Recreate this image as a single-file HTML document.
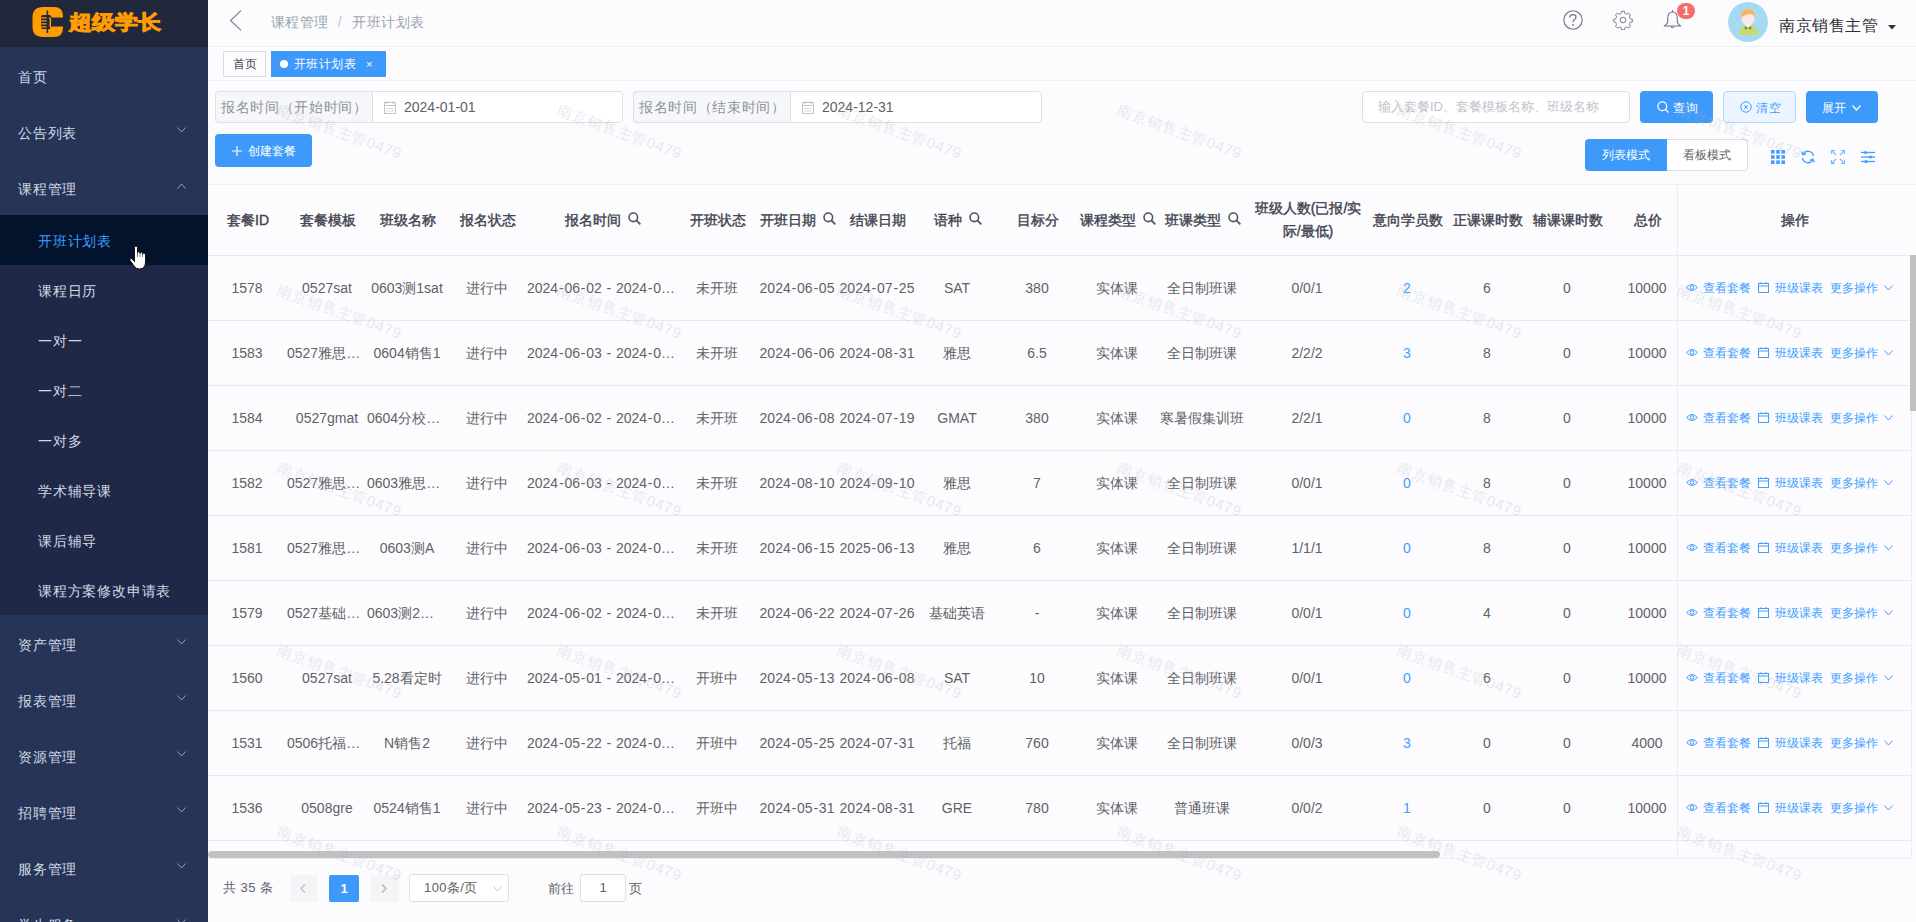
<!DOCTYPE html><html><head><meta charset="utf-8"><title>开班计划表</title><style>
*{box-sizing:border-box;margin:0;padding:0}
html,body{width:1916px;height:922px;overflow:hidden}
body{position:relative;background:#fcfcfe;font-family:"Liberation Sans",sans-serif;color:#606266;font-size:14px}
.a{position:absolute}
.nw{white-space:nowrap}
#side{position:absolute;left:0;top:0;width:208px;height:922px;background:#263557;overflow:hidden;z-index:5}
#logo{position:absolute;left:0;top:0;width:208px;height:47px;background:#21283c}
.mi{position:absolute;left:0;width:208px;height:56px;line-height:60px;color:#d3d9e3;font-size:14px;padding-left:18px;letter-spacing:0.8px}
.mi .chev{position:absolute;left:177px;top:24px;width:9px;height:6px}
#sub{position:absolute;left:0;top:215px;width:208px;height:400px;background:#202848}
.si{position:absolute;left:0;width:208px;height:50px;line-height:53px;color:#d3d9e3;font-size:14px;padding-left:38px;letter-spacing:0.8px}
.si.act{background:#03132b;color:#409eff}
.hline{position:absolute;left:208px;width:1708px;height:1px;background:#eef0f4}
.crumb{color:#9aa4b4;font-size:14px;letter-spacing:0.45px}
.tag{position:absolute;top:51px;height:26px;line-height:25px;font-size:12px;border:1px solid #d8dce5;color:#3a3f4a;background:#fdfdff;padding:0 8px}
.tag.on{background:#3d99fa;border-color:#3d99fa;color:#fff}
.grp{position:absolute;top:91px;height:32px}
.pre{position:absolute;top:0;height:32px;background:#f5f7fa;border:1px solid #dcdfe6;border-right:0;border-radius:4px 0 0 4px;color:#909399;font-size:14px;line-height:31px;padding-left:5px;letter-spacing:0.65px}
.inp{position:absolute;top:0;height:32px;background:#fff;border:1px solid #dcdfe6;border-radius:0 4px 4px 0;color:#606266;font-size:14px;line-height:30px}
.btn{position:absolute;height:32px;border-radius:4px;font-size:12px;line-height:32px;text-align:center;color:#fff;background:#3d99fa}
th,td{padding:0}
.th{position:absolute;top:185px;height:70px;padding-left:2px;display:flex;align-items:center;justify-content:center;color:#3f4450;-webkit-text-stroke:0.4px #3f4450;font-size:14px;text-align:center;line-height:23px}
.td{position:absolute;height:65px;line-height:67px;text-align:center;white-space:nowrap;overflow:hidden;text-overflow:ellipsis;color:#606266;font-size:14px}
.rl{position:absolute;left:207px;width:1704px;height:1px;background:#e6e9f0}
.blue{color:#409eff}
.hy{margin:0 0.8px}
.ops{position:absolute;left:1677px;width:233px;height:65px;line-height:67px;font-size:12px;color:#409eff;white-space:nowrap}
.wm{position:absolute;color:rgba(175,180,198,0.3);font-size:15px;letter-spacing:0.8px;transform:rotate(20deg);transform-origin:0 0;white-space:nowrap}
</style></head><body>
<div id="side">
<div id="logo">
<svg class="a" style="left:32px;top:7px" width="32" height="30" viewBox="0 0 32 30"><path d="M11 0 H22 Q31 0 31 9 V10.5 H20 L18 8 H11 Q9 8 9 10 V20 Q9 22 11 22 H18 L20 19.5 H31 V20.5 Q31 30 22 30 H11 Q0.5 30 0.5 19.5 V10.5 Q0.5 0 11 0 Z" fill="#ff9c00"/><rect x="14.6" y="3.5" width="1.6" height="22.5" fill="#21283c"/><path d="M9 10.8 H14.6 M9 13.8 H14.6 M9 16.8 H14.6 M9 19.8 H14.6" stroke="#ff9c00" stroke-width="1.2"/><path d="M17.2 10.5 Q19.2 12 18.4 15 Q17.6 18 18.8 21" fill="none" stroke="#ff9c00" stroke-width="1.5"/></svg>
<div class="a nw" style="left:69px;top:9px;font-size:20px;line-height:26px;font-weight:bold;color:#ff9c00;-webkit-text-stroke:0.9px #ff9c00;transform:scaleX(1.15);transform-origin:0 0">超级学长</div>
</div>
<div class="mi" style="top:47px">首页</div>
<div class="mi" style="top:103px">公告列表<svg class="chev" viewBox="0 0 9 6"><path d="M0.5 0.5 L4.5 5 L8.5 0.5" fill="none" stroke="#9aa3b0" stroke-width="1"/></svg></div>
<div class="mi" style="top:159px">课程管理<svg class="chev" viewBox="0 0 9 6"><path d="M0.5 5.5 L4.5 1 L8.5 5.5" fill="none" stroke="#9aa3b0" stroke-width="1"/></svg></div>
<div id="sub">
<div class="si act" style="top:0px">开班计划表</div>
<div class="si" style="top:50px">课程日历</div>
<div class="si" style="top:100px">一对一</div>
<div class="si" style="top:150px">一对二</div>
<div class="si" style="top:200px">一对多</div>
<div class="si" style="top:250px">学术辅导课</div>
<div class="si" style="top:300px">课后辅导</div>
<div class="si" style="top:350px">课程方案修改申请表</div>
</div>
<div class="mi" style="top:615px">资产管理<svg class="chev" viewBox="0 0 9 6"><path d="M0.5 0.5 L4.5 5 L8.5 0.5" fill="none" stroke="#9aa3b0" stroke-width="1"/></svg></div>
<div class="mi" style="top:671px">报表管理<svg class="chev" viewBox="0 0 9 6"><path d="M0.5 0.5 L4.5 5 L8.5 0.5" fill="none" stroke="#9aa3b0" stroke-width="1"/></svg></div>
<div class="mi" style="top:727px">资源管理<svg class="chev" viewBox="0 0 9 6"><path d="M0.5 0.5 L4.5 5 L8.5 0.5" fill="none" stroke="#9aa3b0" stroke-width="1"/></svg></div>
<div class="mi" style="top:783px">招聘管理<svg class="chev" viewBox="0 0 9 6"><path d="M0.5 0.5 L4.5 5 L8.5 0.5" fill="none" stroke="#9aa3b0" stroke-width="1"/></svg></div>
<div class="mi" style="top:839px">服务管理<svg class="chev" viewBox="0 0 9 6"><path d="M0.5 0.5 L4.5 5 L8.5 0.5" fill="none" stroke="#9aa3b0" stroke-width="1"/></svg></div>
<div class="mi" style="top:895px">学生服务<svg class="chev" viewBox="0 0 9 6"><path d="M0.5 0.5 L4.5 5 L8.5 0.5" fill="none" stroke="#9aa3b0" stroke-width="1"/></svg></div>
<svg class="a" style="left:129px;top:245px" width="20" height="26" viewBox="0 0 20 26"><path d="M5.5 2.5 Q5.5 1 7 1 Q8.5 1 8.5 2.5 V8 Q8.5 6.5 9.8 6.5 Q11 6.5 11 8 V8.5 Q11 7 12.3 7 Q13.5 7 13.5 8.5 V9.5 Q13.5 8 14.8 8 Q16.5 8 16.5 9.8 V17 Q16.5 24 10.5 24 Q7 24 5 21 L1.2 15.6 Q0.5 14.3 1.6 13.8 Q2.6 13.4 3.6 14.4 L5.5 16.5 Z" fill="#fff" stroke="#111" stroke-width="1"/><path d="M8.5 8 V12 M11 8.5 V12 M13.5 9.5 V12" stroke="#333" stroke-width="0.6"/></svg>
</div>
<svg class="a" style="left:229px;top:10px" width="13" height="21" viewBox="0 0 13 21"><path d="M12 0.7 L1.5 10.5 L12 20.3" fill="none" stroke="#7d8089" stroke-width="1.15"/></svg>
<div class="a nw crumb" style="left:271px;top:13px;line-height:18px">课程管理<span style="margin:0 10px 0 9px;color:#c0c4cc">/</span>开班计划表</div>
<svg class="a" style="left:1563px;top:10px" width="20" height="20" viewBox="0 0 20 20"><circle cx="10" cy="10" r="9.2" fill="none" stroke="#6f747c" stroke-width="1.1"/><path d="M6.8 7.4 Q6.8 4.6 10 4.6 Q13 4.6 13 7.2 Q13 8.8 11.2 9.8 Q10 10.5 10 12.2" fill="none" stroke="#6f747c" stroke-width="1.2"/><circle cx="10" cy="14.8" r="0.9" fill="#6f747c"/></svg>
<svg class="a" style="left:1613px;top:10px" width="20" height="20" viewBox="0 0 24 24"><path d="M12 1.5 l1.6 0 0.6 2.6 a8 8 0 0 1 2.3 1 l2.3-1.4 2.2 2.2-1.4 2.3 a8 8 0 0 1 1 2.3 l2.6 0.6 0 3.2-2.6 0.6 a8 8 0 0 1-1 2.3 l1.4 2.3-2.2 2.2-2.3-1.4 a8 8 0 0 1-2.3 1 l-0.6 2.6-3.2 0-0.6-2.6 a8 8 0 0 1-2.3-1 l-2.3 1.4-2.2-2.2 1.4-2.3 a8 8 0 0 1-1-2.3 l-2.6-0.6 0-3.2 2.6-0.6 a8 8 0 0 1 1-2.3 l-1.4-2.3 2.2-2.2 2.3 1.4 a8 8 0 0 1 2.3-1 l0.6-2.6 z" fill="none" stroke="#6f747c" stroke-width="1.1" stroke-linejoin="round"/><circle cx="12" cy="12" r="3.4" fill="none" stroke="#6f747c" stroke-width="1.1"/></svg>
<svg class="a" style="left:1663px;top:9px" width="19" height="21" viewBox="0 0 19 21"><path d="M9.5 3 Q14.3 3 14.3 9.5 V12.5 Q14.3 14.8 17.8 17 H1.2 Q4.7 14.8 4.7 12.5 V9.5 Q4.7 3 9.5 3 Z" fill="none" stroke="#6f747c" stroke-width="1.1" stroke-linejoin="round"/><path d="M9.5 1 V3" stroke="#6f747c" stroke-width="1.1"/><path d="M7.8 17.5 Q9.5 20 11.2 17.5" fill="none" stroke="#6f747c" stroke-width="1.1"/></svg>
<div class="a" style="left:1677px;top:3px;width:18px;height:16px;border-radius:8px;background:#f56c6c;color:#fff;font-size:12px;line-height:16px;text-align:center;font-weight:bold">1</div>
<svg class="a" style="left:1728px;top:2px" width="40" height="40" viewBox="0 0 40 40"><circle cx="20" cy="20" r="20" fill="#a6daf2"/><path d="M10.5 33 H30.5 L27.5 24.5 H13.5 Z" fill="#cbd96c"/><path d="M16 22 H24 L20 25.5 Z" fill="#ffffff"/><path d="M16.8 24 L20 26 L16.8 28 Z M23.2 24 L20 26 L23.2 28 Z" fill="#5e9c34"/><ellipse cx="20" cy="16.5" rx="6.6" ry="6.8" fill="#fde6ea"/><path d="M13.2 15.5 Q12.6 7 20 7 Q27.4 7 26.8 15.5 Q25 11.5 21 12 Q17 12.5 13.2 15.5 Z" fill="#f8b45a"/></svg>
<div class="a nw" style="left:1779px;top:16px;font-size:16px;line-height:20px;color:#303133;letter-spacing:0.5px">南京销售主管</div>
<svg class="a" style="left:1888px;top:25px" width="8" height="5" viewBox="0 0 8 5"><path d="M0 0 H8 L4 4.5 Z" fill="#303133"/></svg>
<div class="hline" style="top:46px"></div>
<div class="hline" style="top:80px"></div>
<div class="hline" style="top:184px"></div>
<div class="tag" style="left:223px;width:43px;text-align:center;padding:0">首页</div>
<div class="tag on" style="left:271px;width:115px;padding:0"><span class="a" style="left:8px;top:8px;width:8px;height:8px;border-radius:4px;background:#fff"></span><span class="a nw" style="left:22px;top:0;letter-spacing:0.45px">开班计划表</span><span class="a" style="left:94px;top:0;font-size:11px">×</span></div>
<div class="pre nw" style="left:215px;top:91px;width:157px">报名时间（开始时间）</div>
<div class="inp nw" style="left:372px;top:91px;width:251px"><svg class="a" style="left:11px;top:9px" width="12" height="13" viewBox="0 0 12 13"><rect x="0.5" y="1.5" width="11" height="11" fill="none" stroke="#c0c4cc" stroke-width="1"/><line x1="0.5" y1="4.5" x2="11.5" y2="4.5" stroke="#c0c4cc"/><line x1="3" y1="0" x2="3" y2="3" stroke="#c0c4cc"/><line x1="9" y1="0" x2="9" y2="3" stroke="#c0c4cc"/><line x1="2.5" y1="7.5" x2="9.5" y2="7.5" stroke="#c0c4cc" stroke-dasharray="1.5 1"/><line x1="2.5" y1="10" x2="9.5" y2="10" stroke="#c0c4cc" stroke-dasharray="1.5 1"/></svg><span class="a" style="left:31px;top:0">2024-01-01</span></div>
<div class="pre nw" style="left:633px;top:91px;width:157px">报名时间（结束时间）</div>
<div class="inp nw" style="left:790px;top:91px;width:252px"><svg class="a" style="left:11px;top:9px" width="12" height="13" viewBox="0 0 12 13"><rect x="0.5" y="1.5" width="11" height="11" fill="none" stroke="#c0c4cc" stroke-width="1"/><line x1="0.5" y1="4.5" x2="11.5" y2="4.5" stroke="#c0c4cc"/><line x1="3" y1="0" x2="3" y2="3" stroke="#c0c4cc"/><line x1="9" y1="0" x2="9" y2="3" stroke="#c0c4cc"/><line x1="2.5" y1="7.5" x2="9.5" y2="7.5" stroke="#c0c4cc" stroke-dasharray="1.5 1"/><line x1="2.5" y1="10" x2="9.5" y2="10" stroke="#c0c4cc" stroke-dasharray="1.5 1"/></svg><span class="a" style="left:31px;top:0">2024-12-31</span></div>
<div class="inp nw" style="left:1362px;top:91px;width:268px;border-radius:4px;color:#c0c4cc;font-size:13px;padding-left:15px">输入套餐ID、套餐模板名称、班级名称</div>
<div class="btn nw" style="left:1640px;top:91px;width:73px"><svg class="a" style="left:17px;top:10px" width="12" height="12" viewBox="0 0 12 12"><circle cx="5.3" cy="5.3" r="4.4" fill="none" stroke="#fff" stroke-width="1.3"/><line x1="8.5" y1="8.5" x2="11.5" y2="11.5" stroke="#fff" stroke-width="1.3"/></svg><span class="a" style="left:33px;top:1px;letter-spacing:0.6px">查询</span></div>
<div class="btn nw" style="left:1723px;top:91px;width:73px;background:#ecf5ff;border:1px solid #b3d8ff;color:#409eff;line-height:30px"><svg class="a" style="left:16px;top:9px" width="12" height="12" viewBox="0 0 12 12"><circle cx="6" cy="6" r="5.2" fill="none" stroke="#409eff" stroke-width="1"/><path d="M4.2 4.2 L7.8 7.8 M7.8 4.2 L4.2 7.8" stroke="#409eff" stroke-width="1"/></svg><span class="a" style="left:32px;top:1px;letter-spacing:0.6px">清空</span></div>
<div class="btn nw" style="left:1806px;top:91px;width:72px"><span class="a" style="left:16px;top:1px;letter-spacing:0.4px">展开</span><svg class="a" style="left:46px;top:14px" width="9" height="6" viewBox="0 0 9 6"><path d="M0.5 0.5 L4.5 5 L8.5 0.5" fill="none" stroke="#fff" stroke-width="1.2"/></svg></div>
<div class="btn nw" style="left:215px;top:134px;width:97px;height:33px;line-height:35px"><svg class="a" style="left:17px;top:12px" width="10" height="10" viewBox="0 0 10 10"><path d="M5 0 V10 M0 5 H10" stroke="#fff" stroke-width="1.2"/></svg><span class="a" style="left:33px;top:0">创建套餐</span></div>
<div class="btn nw" style="left:1585px;top:139px;width:82px;border-radius:4px 0 0 4px">列表模式</div>
<div class="btn nw" style="left:1667px;top:139px;width:81px;border-radius:0 4px 4px 0;background:#fff;border:1px solid #dcdfe6;border-left:0;color:#606266;line-height:30px">看板模式</div>
<svg class="a" style="left:1771px;top:150px" width="14" height="14" viewBox="0 0 14 14" fill="#409eff"><rect x="0" y="0" width="3.6" height="3.6"/><rect x="0" y="5.2" width="3.6" height="3.6"/><rect x="0" y="10.4" width="3.6" height="3.6"/><rect x="5.2" y="0" width="3.6" height="3.6"/><rect x="5.2" y="5.2" width="3.6" height="3.6"/><rect x="5.2" y="10.4" width="3.6" height="3.6"/><rect x="10.4" y="0" width="3.6" height="3.6"/><rect x="10.4" y="5.2" width="3.6" height="3.6"/><rect x="10.4" y="10.4" width="3.6" height="3.6"/></svg>
<svg class="a" style="left:1801px;top:150px" width="14" height="14" viewBox="0 0 14 14"><path d="M12.5 6 A5.6 5.6 0 0 0 2.2 4" fill="none" stroke="#409eff" stroke-width="1.4"/><path d="M1.5 8 A5.6 5.6 0 0 0 11.8 10" fill="none" stroke="#409eff" stroke-width="1.4"/><path d="M0.8 1.5 L2 4.8 L5 3.6" fill="none" stroke="#409eff" stroke-width="1.3"/><path d="M13.2 12.5 L12 9.2 L9 10.4" fill="none" stroke="#409eff" stroke-width="1.3"/></svg>
<svg class="a" style="left:1831px;top:150px" width="14" height="14" viewBox="0 0 14 14" fill="none" stroke="#79b8ff" stroke-width="1.1"><path d="M0.5 4 V0.5 H4 M10 0.5 H13.5 V4 M13.5 10 V13.5 H10 M4 13.5 H0.5 V10"/><path d="M1 1 L5 5 M13 1 L9 5 M13 13 L9 9 M1 13 L5 9"/></svg>
<svg class="a" style="left:1861px;top:150px" width="14" height="14" viewBox="0 0 14 14"><g stroke="#409eff" stroke-width="1.3"><line x1="0" y1="2.5" x2="14" y2="2.5"/><line x1="0" y1="7" x2="14" y2="7"/><line x1="0" y1="11.5" x2="14" y2="11.5"/></g><g fill="#409eff"><circle cx="4.5" cy="2.5" r="1.6"/><circle cx="9.5" cy="7" r="1.6"/><circle cx="5" cy="11.5" r="1.6"/></g></svg>
<div class="th" style="left:207px;width:80px"><span>套餐ID</span></div>
<div class="th" style="left:287px;width:80px"><span>套餐模板</span></div>
<div class="th" style="left:367px;width:80px"><span>班级名称</span></div>
<div class="th" style="left:447px;width:80px"><span>报名状态</span></div>
<div class="th" style="left:527px;width:150px"><span>报名时间<svg style="margin-left:7px;vertical-align:middle;position:relative;top:-2px" width="13" height="13" viewBox="0 0 13 13"><circle cx="5.3" cy="5.3" r="4.3" fill="none" stroke="#515560" stroke-width="1.6"/><line x1="8.4" y1="8.4" x2="12.3" y2="12.3" stroke="#515560" stroke-width="1.8"/></svg></span></div>
<div class="th" style="left:677px;width:80px"><span>开班状态</span></div>
<div class="th" style="left:757px;width:80px"><span>开班日期<svg style="margin-left:7px;vertical-align:middle;position:relative;top:-2px" width="13" height="13" viewBox="0 0 13 13"><circle cx="5.3" cy="5.3" r="4.3" fill="none" stroke="#515560" stroke-width="1.6"/><line x1="8.4" y1="8.4" x2="12.3" y2="12.3" stroke="#515560" stroke-width="1.8"/></svg></span></div>
<div class="th" style="left:837px;width:80px"><span>结课日期</span></div>
<div class="th" style="left:917px;width:80px"><span>语种<svg style="margin-left:7px;vertical-align:middle;position:relative;top:-2px" width="13" height="13" viewBox="0 0 13 13"><circle cx="5.3" cy="5.3" r="4.3" fill="none" stroke="#515560" stroke-width="1.6"/><line x1="8.4" y1="8.4" x2="12.3" y2="12.3" stroke="#515560" stroke-width="1.8"/></svg></span></div>
<div class="th" style="left:997px;width:80px"><span>目标分</span></div>
<div class="th" style="left:1077px;width:80px"><span>课程类型<svg style="margin-left:7px;vertical-align:middle;position:relative;top:-2px" width="13" height="13" viewBox="0 0 13 13"><circle cx="5.3" cy="5.3" r="4.3" fill="none" stroke="#515560" stroke-width="1.6"/><line x1="8.4" y1="8.4" x2="12.3" y2="12.3" stroke="#515560" stroke-width="1.8"/></svg></span></div>
<div class="th" style="left:1157px;width:90px"><span>班课类型<svg style="margin-left:7px;vertical-align:middle;position:relative;top:-2px" width="13" height="13" viewBox="0 0 13 13"><circle cx="5.3" cy="5.3" r="4.3" fill="none" stroke="#515560" stroke-width="1.6"/><line x1="8.4" y1="8.4" x2="12.3" y2="12.3" stroke="#515560" stroke-width="1.8"/></svg></span></div>
<div class="th" style="left:1247px;width:120px"><span>班级人数(已报/实际/最低)</span></div>
<div class="th" style="left:1367px;width:80px"><span>意向学员数</span></div>
<div class="th" style="left:1447px;width:80px"><span>正课课时数</span></div>
<div class="th" style="left:1527px;width:80px"><span>辅课课时数</span></div>
<div class="th" style="left:1607px;width:80px"><span>总价</span></div>
<div class="th" style="left:1677px;width:233px">操作</div>
<div class="rl" style="top:255px"></div>
<div class="td" style="left:207px;top:255px;width:80px">1578</div>
<div class="td" style="left:287px;top:255px;width:80px">0527sat</div>
<div class="td" style="left:367px;top:255px;width:80px">0603测1sat</div>
<div class="td" style="left:447px;top:255px;width:80px">进行中</div>
<div class="td" style="left:527px;top:255px;width:150px">2024<span class="hy">-</span>06<span class="hy">-</span>02 <span class="hy">-</span> 2024<span class="hy">-</span>07<span class="hy">-</span>01</div>
<div class="td" style="left:677px;top:255px;width:80px">未开班</div>
<div class="td" style="left:757px;top:255px;width:80px">2024<span class="hy">-</span>06<span class="hy">-</span>05</div>
<div class="td" style="left:837px;top:255px;width:80px">2024<span class="hy">-</span>07<span class="hy">-</span>25</div>
<div class="td" style="left:917px;top:255px;width:80px">SAT</div>
<div class="td" style="left:997px;top:255px;width:80px">380</div>
<div class="td" style="left:1077px;top:255px;width:80px">实体课</div>
<div class="td" style="left:1157px;top:255px;width:90px">全日制班课</div>
<div class="td" style="left:1247px;top:255px;width:120px">0/0/1</div>
<div class="td blue" style="left:1367px;top:255px;width:80px">2</div>
<div class="td" style="left:1447px;top:255px;width:80px">6</div>
<div class="td" style="left:1527px;top:255px;width:80px">0</div>
<div class="td" style="left:1607px;top:255px;width:80px">10000</div>
<div class="ops" style="top:255px"><span class="a" style="left:9px;top:0"><svg style="vertical-align:middle;position:relative;top:-1px;margin-right:5px" width="12" height="9" viewBox="0 0 12 9"><path d="M0.6 4.5 Q6 -1.5 11.4 4.5 Q6 10.5 0.6 4.5 Z" fill="none" stroke="#409eff" stroke-width="1"/><circle cx="6" cy="4.5" r="1.8" fill="none" stroke="#409eff" stroke-width="1"/></svg>查看套餐<svg style="vertical-align:middle;position:relative;top:-1px;margin-left:7px;margin-right:6px" width="11" height="11" viewBox="0 0 11 11"><rect x="0.5" y="1.5" width="10" height="9" fill="none" stroke="#409eff" stroke-width="1"/><line x1="0.5" y1="4" x2="10.5" y2="4" stroke="#409eff"/><line x1="3" y1="0" x2="3" y2="2" stroke="#409eff"/><line x1="8" y1="0" x2="8" y2="2" stroke="#409eff"/></svg>班级课表<span style="margin-left:7px">更多操作</span><svg style="vertical-align:middle;position:relative;top:-1px;margin-left:6px" width="9" height="6" viewBox="0 0 9 6"><path d="M0.5 0.5 L4.5 5 L8.5 0.5" fill="none" stroke="#409eff" stroke-width="1"/></svg></span></div>
<div class="rl" style="top:320px"></div>
<div class="td" style="left:207px;top:320px;width:80px">1583</div>
<div class="td" style="left:287px;top:320px;width:80px">0527雅思考试</div>
<div class="td" style="left:367px;top:320px;width:80px">0604销售1</div>
<div class="td" style="left:447px;top:320px;width:80px">进行中</div>
<div class="td" style="left:527px;top:320px;width:150px">2024<span class="hy">-</span>06<span class="hy">-</span>03 <span class="hy">-</span> 2024<span class="hy">-</span>07<span class="hy">-</span>01</div>
<div class="td" style="left:677px;top:320px;width:80px">未开班</div>
<div class="td" style="left:757px;top:320px;width:80px">2024<span class="hy">-</span>06<span class="hy">-</span>06</div>
<div class="td" style="left:837px;top:320px;width:80px">2024<span class="hy">-</span>08<span class="hy">-</span>31</div>
<div class="td" style="left:917px;top:320px;width:80px">雅思</div>
<div class="td" style="left:997px;top:320px;width:80px">6.5</div>
<div class="td" style="left:1077px;top:320px;width:80px">实体课</div>
<div class="td" style="left:1157px;top:320px;width:90px">全日制班课</div>
<div class="td" style="left:1247px;top:320px;width:120px">2/2/2</div>
<div class="td blue" style="left:1367px;top:320px;width:80px">3</div>
<div class="td" style="left:1447px;top:320px;width:80px">8</div>
<div class="td" style="left:1527px;top:320px;width:80px">0</div>
<div class="td" style="left:1607px;top:320px;width:80px">10000</div>
<div class="ops" style="top:320px"><span class="a" style="left:9px;top:0"><svg style="vertical-align:middle;position:relative;top:-1px;margin-right:5px" width="12" height="9" viewBox="0 0 12 9"><path d="M0.6 4.5 Q6 -1.5 11.4 4.5 Q6 10.5 0.6 4.5 Z" fill="none" stroke="#409eff" stroke-width="1"/><circle cx="6" cy="4.5" r="1.8" fill="none" stroke="#409eff" stroke-width="1"/></svg>查看套餐<svg style="vertical-align:middle;position:relative;top:-1px;margin-left:7px;margin-right:6px" width="11" height="11" viewBox="0 0 11 11"><rect x="0.5" y="1.5" width="10" height="9" fill="none" stroke="#409eff" stroke-width="1"/><line x1="0.5" y1="4" x2="10.5" y2="4" stroke="#409eff"/><line x1="3" y1="0" x2="3" y2="2" stroke="#409eff"/><line x1="8" y1="0" x2="8" y2="2" stroke="#409eff"/></svg>班级课表<span style="margin-left:7px">更多操作</span><svg style="vertical-align:middle;position:relative;top:-1px;margin-left:6px" width="9" height="6" viewBox="0 0 9 6"><path d="M0.5 0.5 L4.5 5 L8.5 0.5" fill="none" stroke="#409eff" stroke-width="1"/></svg></span></div>
<div class="rl" style="top:385px"></div>
<div class="td" style="left:207px;top:385px;width:80px">1584</div>
<div class="td" style="left:287px;top:385px;width:80px">0527gmat</div>
<div class="td" style="left:367px;top:385px;width:80px">0604分校测试</div>
<div class="td" style="left:447px;top:385px;width:80px">进行中</div>
<div class="td" style="left:527px;top:385px;width:150px">2024<span class="hy">-</span>06<span class="hy">-</span>02 <span class="hy">-</span> 2024<span class="hy">-</span>07<span class="hy">-</span>01</div>
<div class="td" style="left:677px;top:385px;width:80px">未开班</div>
<div class="td" style="left:757px;top:385px;width:80px">2024<span class="hy">-</span>06<span class="hy">-</span>08</div>
<div class="td" style="left:837px;top:385px;width:80px">2024<span class="hy">-</span>07<span class="hy">-</span>19</div>
<div class="td" style="left:917px;top:385px;width:80px">GMAT</div>
<div class="td" style="left:997px;top:385px;width:80px">380</div>
<div class="td" style="left:1077px;top:385px;width:80px">实体课</div>
<div class="td" style="left:1157px;top:385px;width:90px">寒暑假集训班</div>
<div class="td" style="left:1247px;top:385px;width:120px">2/2/1</div>
<div class="td blue" style="left:1367px;top:385px;width:80px">0</div>
<div class="td" style="left:1447px;top:385px;width:80px">8</div>
<div class="td" style="left:1527px;top:385px;width:80px">0</div>
<div class="td" style="left:1607px;top:385px;width:80px">10000</div>
<div class="ops" style="top:385px"><span class="a" style="left:9px;top:0"><svg style="vertical-align:middle;position:relative;top:-1px;margin-right:5px" width="12" height="9" viewBox="0 0 12 9"><path d="M0.6 4.5 Q6 -1.5 11.4 4.5 Q6 10.5 0.6 4.5 Z" fill="none" stroke="#409eff" stroke-width="1"/><circle cx="6" cy="4.5" r="1.8" fill="none" stroke="#409eff" stroke-width="1"/></svg>查看套餐<svg style="vertical-align:middle;position:relative;top:-1px;margin-left:7px;margin-right:6px" width="11" height="11" viewBox="0 0 11 11"><rect x="0.5" y="1.5" width="10" height="9" fill="none" stroke="#409eff" stroke-width="1"/><line x1="0.5" y1="4" x2="10.5" y2="4" stroke="#409eff"/><line x1="3" y1="0" x2="3" y2="2" stroke="#409eff"/><line x1="8" y1="0" x2="8" y2="2" stroke="#409eff"/></svg>班级课表<span style="margin-left:7px">更多操作</span><svg style="vertical-align:middle;position:relative;top:-1px;margin-left:6px" width="9" height="6" viewBox="0 0 9 6"><path d="M0.5 0.5 L4.5 5 L8.5 0.5" fill="none" stroke="#409eff" stroke-width="1"/></svg></span></div>
<div class="rl" style="top:450px"></div>
<div class="td" style="left:207px;top:450px;width:80px">1582</div>
<div class="td" style="left:287px;top:450px;width:80px">0527雅思考试</div>
<div class="td" style="left:367px;top:450px;width:80px">0603雅思测试</div>
<div class="td" style="left:447px;top:450px;width:80px">进行中</div>
<div class="td" style="left:527px;top:450px;width:150px">2024<span class="hy">-</span>06<span class="hy">-</span>03 <span class="hy">-</span> 2024<span class="hy">-</span>07<span class="hy">-</span>01</div>
<div class="td" style="left:677px;top:450px;width:80px">未开班</div>
<div class="td" style="left:757px;top:450px;width:80px">2024<span class="hy">-</span>08<span class="hy">-</span>10</div>
<div class="td" style="left:837px;top:450px;width:80px">2024<span class="hy">-</span>09<span class="hy">-</span>10</div>
<div class="td" style="left:917px;top:450px;width:80px">雅思</div>
<div class="td" style="left:997px;top:450px;width:80px">7</div>
<div class="td" style="left:1077px;top:450px;width:80px">实体课</div>
<div class="td" style="left:1157px;top:450px;width:90px">全日制班课</div>
<div class="td" style="left:1247px;top:450px;width:120px">0/0/1</div>
<div class="td blue" style="left:1367px;top:450px;width:80px">0</div>
<div class="td" style="left:1447px;top:450px;width:80px">8</div>
<div class="td" style="left:1527px;top:450px;width:80px">0</div>
<div class="td" style="left:1607px;top:450px;width:80px">10000</div>
<div class="ops" style="top:450px"><span class="a" style="left:9px;top:0"><svg style="vertical-align:middle;position:relative;top:-1px;margin-right:5px" width="12" height="9" viewBox="0 0 12 9"><path d="M0.6 4.5 Q6 -1.5 11.4 4.5 Q6 10.5 0.6 4.5 Z" fill="none" stroke="#409eff" stroke-width="1"/><circle cx="6" cy="4.5" r="1.8" fill="none" stroke="#409eff" stroke-width="1"/></svg>查看套餐<svg style="vertical-align:middle;position:relative;top:-1px;margin-left:7px;margin-right:6px" width="11" height="11" viewBox="0 0 11 11"><rect x="0.5" y="1.5" width="10" height="9" fill="none" stroke="#409eff" stroke-width="1"/><line x1="0.5" y1="4" x2="10.5" y2="4" stroke="#409eff"/><line x1="3" y1="0" x2="3" y2="2" stroke="#409eff"/><line x1="8" y1="0" x2="8" y2="2" stroke="#409eff"/></svg>班级课表<span style="margin-left:7px">更多操作</span><svg style="vertical-align:middle;position:relative;top:-1px;margin-left:6px" width="9" height="6" viewBox="0 0 9 6"><path d="M0.5 0.5 L4.5 5 L8.5 0.5" fill="none" stroke="#409eff" stroke-width="1"/></svg></span></div>
<div class="rl" style="top:515px"></div>
<div class="td" style="left:207px;top:515px;width:80px">1581</div>
<div class="td" style="left:287px;top:515px;width:80px">0527雅思考试</div>
<div class="td" style="left:367px;top:515px;width:80px">0603测A</div>
<div class="td" style="left:447px;top:515px;width:80px">进行中</div>
<div class="td" style="left:527px;top:515px;width:150px">2024<span class="hy">-</span>06<span class="hy">-</span>03 <span class="hy">-</span> 2024<span class="hy">-</span>07<span class="hy">-</span>01</div>
<div class="td" style="left:677px;top:515px;width:80px">未开班</div>
<div class="td" style="left:757px;top:515px;width:80px">2024<span class="hy">-</span>06<span class="hy">-</span>15</div>
<div class="td" style="left:837px;top:515px;width:80px">2025<span class="hy">-</span>06<span class="hy">-</span>13</div>
<div class="td" style="left:917px;top:515px;width:80px">雅思</div>
<div class="td" style="left:997px;top:515px;width:80px">6</div>
<div class="td" style="left:1077px;top:515px;width:80px">实体课</div>
<div class="td" style="left:1157px;top:515px;width:90px">全日制班课</div>
<div class="td" style="left:1247px;top:515px;width:120px">1/1/1</div>
<div class="td blue" style="left:1367px;top:515px;width:80px">0</div>
<div class="td" style="left:1447px;top:515px;width:80px">8</div>
<div class="td" style="left:1527px;top:515px;width:80px">0</div>
<div class="td" style="left:1607px;top:515px;width:80px">10000</div>
<div class="ops" style="top:515px"><span class="a" style="left:9px;top:0"><svg style="vertical-align:middle;position:relative;top:-1px;margin-right:5px" width="12" height="9" viewBox="0 0 12 9"><path d="M0.6 4.5 Q6 -1.5 11.4 4.5 Q6 10.5 0.6 4.5 Z" fill="none" stroke="#409eff" stroke-width="1"/><circle cx="6" cy="4.5" r="1.8" fill="none" stroke="#409eff" stroke-width="1"/></svg>查看套餐<svg style="vertical-align:middle;position:relative;top:-1px;margin-left:7px;margin-right:6px" width="11" height="11" viewBox="0 0 11 11"><rect x="0.5" y="1.5" width="10" height="9" fill="none" stroke="#409eff" stroke-width="1"/><line x1="0.5" y1="4" x2="10.5" y2="4" stroke="#409eff"/><line x1="3" y1="0" x2="3" y2="2" stroke="#409eff"/><line x1="8" y1="0" x2="8" y2="2" stroke="#409eff"/></svg>班级课表<span style="margin-left:7px">更多操作</span><svg style="vertical-align:middle;position:relative;top:-1px;margin-left:6px" width="9" height="6" viewBox="0 0 9 6"><path d="M0.5 0.5 L4.5 5 L8.5 0.5" fill="none" stroke="#409eff" stroke-width="1"/></svg></span></div>
<div class="rl" style="top:580px"></div>
<div class="td" style="left:207px;top:580px;width:80px">1579</div>
<div class="td" style="left:287px;top:580px;width:80px">0527基础英语</div>
<div class="td" style="left:367px;top:580px;width:80px">0603测2测试</div>
<div class="td" style="left:447px;top:580px;width:80px">进行中</div>
<div class="td" style="left:527px;top:580px;width:150px">2024<span class="hy">-</span>06<span class="hy">-</span>02 <span class="hy">-</span> 2024<span class="hy">-</span>07<span class="hy">-</span>01</div>
<div class="td" style="left:677px;top:580px;width:80px">未开班</div>
<div class="td" style="left:757px;top:580px;width:80px">2024<span class="hy">-</span>06<span class="hy">-</span>22</div>
<div class="td" style="left:837px;top:580px;width:80px">2024<span class="hy">-</span>07<span class="hy">-</span>26</div>
<div class="td" style="left:917px;top:580px;width:80px">基础英语</div>
<div class="td" style="left:997px;top:580px;width:80px">-</div>
<div class="td" style="left:1077px;top:580px;width:80px">实体课</div>
<div class="td" style="left:1157px;top:580px;width:90px">全日制班课</div>
<div class="td" style="left:1247px;top:580px;width:120px">0/0/1</div>
<div class="td blue" style="left:1367px;top:580px;width:80px">0</div>
<div class="td" style="left:1447px;top:580px;width:80px">4</div>
<div class="td" style="left:1527px;top:580px;width:80px">0</div>
<div class="td" style="left:1607px;top:580px;width:80px">10000</div>
<div class="ops" style="top:580px"><span class="a" style="left:9px;top:0"><svg style="vertical-align:middle;position:relative;top:-1px;margin-right:5px" width="12" height="9" viewBox="0 0 12 9"><path d="M0.6 4.5 Q6 -1.5 11.4 4.5 Q6 10.5 0.6 4.5 Z" fill="none" stroke="#409eff" stroke-width="1"/><circle cx="6" cy="4.5" r="1.8" fill="none" stroke="#409eff" stroke-width="1"/></svg>查看套餐<svg style="vertical-align:middle;position:relative;top:-1px;margin-left:7px;margin-right:6px" width="11" height="11" viewBox="0 0 11 11"><rect x="0.5" y="1.5" width="10" height="9" fill="none" stroke="#409eff" stroke-width="1"/><line x1="0.5" y1="4" x2="10.5" y2="4" stroke="#409eff"/><line x1="3" y1="0" x2="3" y2="2" stroke="#409eff"/><line x1="8" y1="0" x2="8" y2="2" stroke="#409eff"/></svg>班级课表<span style="margin-left:7px">更多操作</span><svg style="vertical-align:middle;position:relative;top:-1px;margin-left:6px" width="9" height="6" viewBox="0 0 9 6"><path d="M0.5 0.5 L4.5 5 L8.5 0.5" fill="none" stroke="#409eff" stroke-width="1"/></svg></span></div>
<div class="rl" style="top:645px"></div>
<div class="td" style="left:207px;top:645px;width:80px">1560</div>
<div class="td" style="left:287px;top:645px;width:80px">0527sat</div>
<div class="td" style="left:367px;top:645px;width:80px">5.28看定时</div>
<div class="td" style="left:447px;top:645px;width:80px">进行中</div>
<div class="td" style="left:527px;top:645px;width:150px">2024<span class="hy">-</span>05<span class="hy">-</span>01 <span class="hy">-</span> 2024<span class="hy">-</span>07<span class="hy">-</span>01</div>
<div class="td" style="left:677px;top:645px;width:80px">开班中</div>
<div class="td" style="left:757px;top:645px;width:80px">2024<span class="hy">-</span>05<span class="hy">-</span>13</div>
<div class="td" style="left:837px;top:645px;width:80px">2024<span class="hy">-</span>06<span class="hy">-</span>08</div>
<div class="td" style="left:917px;top:645px;width:80px">SAT</div>
<div class="td" style="left:997px;top:645px;width:80px">10</div>
<div class="td" style="left:1077px;top:645px;width:80px">实体课</div>
<div class="td" style="left:1157px;top:645px;width:90px">全日制班课</div>
<div class="td" style="left:1247px;top:645px;width:120px">0/0/1</div>
<div class="td blue" style="left:1367px;top:645px;width:80px">0</div>
<div class="td" style="left:1447px;top:645px;width:80px">6</div>
<div class="td" style="left:1527px;top:645px;width:80px">0</div>
<div class="td" style="left:1607px;top:645px;width:80px">10000</div>
<div class="ops" style="top:645px"><span class="a" style="left:9px;top:0"><svg style="vertical-align:middle;position:relative;top:-1px;margin-right:5px" width="12" height="9" viewBox="0 0 12 9"><path d="M0.6 4.5 Q6 -1.5 11.4 4.5 Q6 10.5 0.6 4.5 Z" fill="none" stroke="#409eff" stroke-width="1"/><circle cx="6" cy="4.5" r="1.8" fill="none" stroke="#409eff" stroke-width="1"/></svg>查看套餐<svg style="vertical-align:middle;position:relative;top:-1px;margin-left:7px;margin-right:6px" width="11" height="11" viewBox="0 0 11 11"><rect x="0.5" y="1.5" width="10" height="9" fill="none" stroke="#409eff" stroke-width="1"/><line x1="0.5" y1="4" x2="10.5" y2="4" stroke="#409eff"/><line x1="3" y1="0" x2="3" y2="2" stroke="#409eff"/><line x1="8" y1="0" x2="8" y2="2" stroke="#409eff"/></svg>班级课表<span style="margin-left:7px">更多操作</span><svg style="vertical-align:middle;position:relative;top:-1px;margin-left:6px" width="9" height="6" viewBox="0 0 9 6"><path d="M0.5 0.5 L4.5 5 L8.5 0.5" fill="none" stroke="#409eff" stroke-width="1"/></svg></span></div>
<div class="rl" style="top:710px"></div>
<div class="td" style="left:207px;top:710px;width:80px">1531</div>
<div class="td" style="left:287px;top:710px;width:80px">0506托福考试</div>
<div class="td" style="left:367px;top:710px;width:80px">N销售2</div>
<div class="td" style="left:447px;top:710px;width:80px">进行中</div>
<div class="td" style="left:527px;top:710px;width:150px">2024<span class="hy">-</span>05<span class="hy">-</span>22 <span class="hy">-</span> 2024<span class="hy">-</span>07<span class="hy">-</span>01</div>
<div class="td" style="left:677px;top:710px;width:80px">开班中</div>
<div class="td" style="left:757px;top:710px;width:80px">2024<span class="hy">-</span>05<span class="hy">-</span>25</div>
<div class="td" style="left:837px;top:710px;width:80px">2024<span class="hy">-</span>07<span class="hy">-</span>31</div>
<div class="td" style="left:917px;top:710px;width:80px">托福</div>
<div class="td" style="left:997px;top:710px;width:80px">760</div>
<div class="td" style="left:1077px;top:710px;width:80px">实体课</div>
<div class="td" style="left:1157px;top:710px;width:90px">全日制班课</div>
<div class="td" style="left:1247px;top:710px;width:120px">0/0/3</div>
<div class="td blue" style="left:1367px;top:710px;width:80px">3</div>
<div class="td" style="left:1447px;top:710px;width:80px">0</div>
<div class="td" style="left:1527px;top:710px;width:80px">0</div>
<div class="td" style="left:1607px;top:710px;width:80px">4000</div>
<div class="ops" style="top:710px"><span class="a" style="left:9px;top:0"><svg style="vertical-align:middle;position:relative;top:-1px;margin-right:5px" width="12" height="9" viewBox="0 0 12 9"><path d="M0.6 4.5 Q6 -1.5 11.4 4.5 Q6 10.5 0.6 4.5 Z" fill="none" stroke="#409eff" stroke-width="1"/><circle cx="6" cy="4.5" r="1.8" fill="none" stroke="#409eff" stroke-width="1"/></svg>查看套餐<svg style="vertical-align:middle;position:relative;top:-1px;margin-left:7px;margin-right:6px" width="11" height="11" viewBox="0 0 11 11"><rect x="0.5" y="1.5" width="10" height="9" fill="none" stroke="#409eff" stroke-width="1"/><line x1="0.5" y1="4" x2="10.5" y2="4" stroke="#409eff"/><line x1="3" y1="0" x2="3" y2="2" stroke="#409eff"/><line x1="8" y1="0" x2="8" y2="2" stroke="#409eff"/></svg>班级课表<span style="margin-left:7px">更多操作</span><svg style="vertical-align:middle;position:relative;top:-1px;margin-left:6px" width="9" height="6" viewBox="0 0 9 6"><path d="M0.5 0.5 L4.5 5 L8.5 0.5" fill="none" stroke="#409eff" stroke-width="1"/></svg></span></div>
<div class="rl" style="top:775px"></div>
<div class="td" style="left:207px;top:775px;width:80px">1536</div>
<div class="td" style="left:287px;top:775px;width:80px">0508gre</div>
<div class="td" style="left:367px;top:775px;width:80px">0524销售1</div>
<div class="td" style="left:447px;top:775px;width:80px">进行中</div>
<div class="td" style="left:527px;top:775px;width:150px">2024<span class="hy">-</span>05<span class="hy">-</span>23 <span class="hy">-</span> 2024<span class="hy">-</span>07<span class="hy">-</span>01</div>
<div class="td" style="left:677px;top:775px;width:80px">开班中</div>
<div class="td" style="left:757px;top:775px;width:80px">2024<span class="hy">-</span>05<span class="hy">-</span>31</div>
<div class="td" style="left:837px;top:775px;width:80px">2024<span class="hy">-</span>08<span class="hy">-</span>31</div>
<div class="td" style="left:917px;top:775px;width:80px">GRE</div>
<div class="td" style="left:997px;top:775px;width:80px">780</div>
<div class="td" style="left:1077px;top:775px;width:80px">实体课</div>
<div class="td" style="left:1157px;top:775px;width:90px">普通班课</div>
<div class="td" style="left:1247px;top:775px;width:120px">0/0/2</div>
<div class="td blue" style="left:1367px;top:775px;width:80px">1</div>
<div class="td" style="left:1447px;top:775px;width:80px">0</div>
<div class="td" style="left:1527px;top:775px;width:80px">0</div>
<div class="td" style="left:1607px;top:775px;width:80px">10000</div>
<div class="ops" style="top:775px"><span class="a" style="left:9px;top:0"><svg style="vertical-align:middle;position:relative;top:-1px;margin-right:5px" width="12" height="9" viewBox="0 0 12 9"><path d="M0.6 4.5 Q6 -1.5 11.4 4.5 Q6 10.5 0.6 4.5 Z" fill="none" stroke="#409eff" stroke-width="1"/><circle cx="6" cy="4.5" r="1.8" fill="none" stroke="#409eff" stroke-width="1"/></svg>查看套餐<svg style="vertical-align:middle;position:relative;top:-1px;margin-left:7px;margin-right:6px" width="11" height="11" viewBox="0 0 11 11"><rect x="0.5" y="1.5" width="10" height="9" fill="none" stroke="#409eff" stroke-width="1"/><line x1="0.5" y1="4" x2="10.5" y2="4" stroke="#409eff"/><line x1="3" y1="0" x2="3" y2="2" stroke="#409eff"/><line x1="8" y1="0" x2="8" y2="2" stroke="#409eff"/></svg>班级课表<span style="margin-left:7px">更多操作</span><svg style="vertical-align:middle;position:relative;top:-1px;margin-left:6px" width="9" height="6" viewBox="0 0 9 6"><path d="M0.5 0.5 L4.5 5 L8.5 0.5" fill="none" stroke="#409eff" stroke-width="1"/></svg></span></div>
<div class="rl" style="top:840px"></div>
<div class="a" style="left:1677px;top:185px;width:1px;height:673px;background:#ebeef5"></div>
<div class="a" style="left:1911px;top:255px;width:1px;height:603px;background:#ebeef5"></div>
<div class="a" style="left:207px;top:858px;width:1704px;height:1px;background:#ebeef5"></div>
<div class="a" style="left:208px;top:851px;width:1232px;height:7px;border-radius:4px;background:#c1c1c1"></div>
<div class="a" style="left:1910px;top:255px;width:6px;height:156px;background:#c1c1c1"></div>
<div class="a nw" style="left:223px;top:879px;font-size:13px;line-height:18px;color:#606266;letter-spacing:0.5px">共 35 条</div>
<div class="a" style="left:290px;top:875px;width:28px;height:27px;background:#f5f5f8;border-radius:2px"><svg class="a" style="left:10px;top:9px" width="6" height="9" viewBox="0 0 6 9"><path d="M5 0.5 L1 4.5 L5 8.5" fill="none" stroke="#c0c4cc" stroke-width="1.5"/></svg></div>
<div class="a" style="left:329px;top:875px;width:30px;height:27px;background:#3d99fa;border-radius:2px;color:#fff;font-weight:bold;font-size:13px;line-height:27px;text-align:center">1</div>
<div class="a" style="left:370px;top:875px;width:29px;height:27px;background:#f5f5f8;border-radius:2px"><svg class="a" style="left:11px;top:9px" width="6" height="9" viewBox="0 0 6 9"><path d="M1 0.5 L5 4.5 L1 8.5" fill="none" stroke="#b4b8c0" stroke-width="1.5"/></svg></div>
<div class="a nw" style="left:409px;top:874px;width:100px;height:28px;border:1px solid #dcdfe6;border-radius:3px;background:#fff;font-size:13px;line-height:26px;color:#606266;padding-left:14px;letter-spacing:0.4px">100条/页<svg class="a" style="left:83px;top:11px" width="9" height="6" viewBox="0 0 9 6"><path d="M0.5 0.5 L4.5 5 L8.5 0.5" fill="none" stroke="#c0c4cc" stroke-width="1"/></svg></div>
<div class="a nw" style="left:548px;top:880px;font-size:13px;line-height:18px;color:#606266">前往</div>
<div class="a" style="left:580px;top:874px;width:46px;height:28px;border:1px solid #dcdfe6;border-radius:3px;background:#fff;font-size:13px;line-height:26px;color:#606266;text-align:center">1</div>
<div class="a nw" style="left:629px;top:880px;font-size:13px;line-height:18px;color:#606266">页</div>
<div class="wm" style="left:281px;top:101px">南京销售主管0479</div>
<div class="wm" style="left:561px;top:101px">南京销售主管0479</div>
<div class="wm" style="left:841px;top:101px">南京销售主管0479</div>
<div class="wm" style="left:1121px;top:101px">南京销售主管0479</div>
<div class="wm" style="left:1401px;top:101px">南京销售主管0479</div>
<div class="wm" style="left:1681px;top:101px">南京销售主管0479</div>
<div class="wm" style="left:281px;top:281px">南京销售主管0479</div>
<div class="wm" style="left:561px;top:281px">南京销售主管0479</div>
<div class="wm" style="left:841px;top:281px">南京销售主管0479</div>
<div class="wm" style="left:1121px;top:281px">南京销售主管0479</div>
<div class="wm" style="left:1401px;top:281px">南京销售主管0479</div>
<div class="wm" style="left:1681px;top:281px">南京销售主管0479</div>
<div class="wm" style="left:281px;top:459px">南京销售主管0479</div>
<div class="wm" style="left:561px;top:459px">南京销售主管0479</div>
<div class="wm" style="left:841px;top:459px">南京销售主管0479</div>
<div class="wm" style="left:1121px;top:459px">南京销售主管0479</div>
<div class="wm" style="left:1401px;top:459px">南京销售主管0479</div>
<div class="wm" style="left:1681px;top:459px">南京销售主管0479</div>
<div class="wm" style="left:281px;top:641px">南京销售主管0479</div>
<div class="wm" style="left:561px;top:641px">南京销售主管0479</div>
<div class="wm" style="left:841px;top:641px">南京销售主管0479</div>
<div class="wm" style="left:1121px;top:641px">南京销售主管0479</div>
<div class="wm" style="left:1401px;top:641px">南京销售主管0479</div>
<div class="wm" style="left:1681px;top:641px">南京销售主管0479</div>
<div class="wm" style="left:281px;top:823px">南京销售主管0479</div>
<div class="wm" style="left:561px;top:823px">南京销售主管0479</div>
<div class="wm" style="left:841px;top:823px">南京销售主管0479</div>
<div class="wm" style="left:1121px;top:823px">南京销售主管0479</div>
<div class="wm" style="left:1401px;top:823px">南京销售主管0479</div>
<div class="wm" style="left:1681px;top:823px">南京销售主管0479</div>
</body></html>
